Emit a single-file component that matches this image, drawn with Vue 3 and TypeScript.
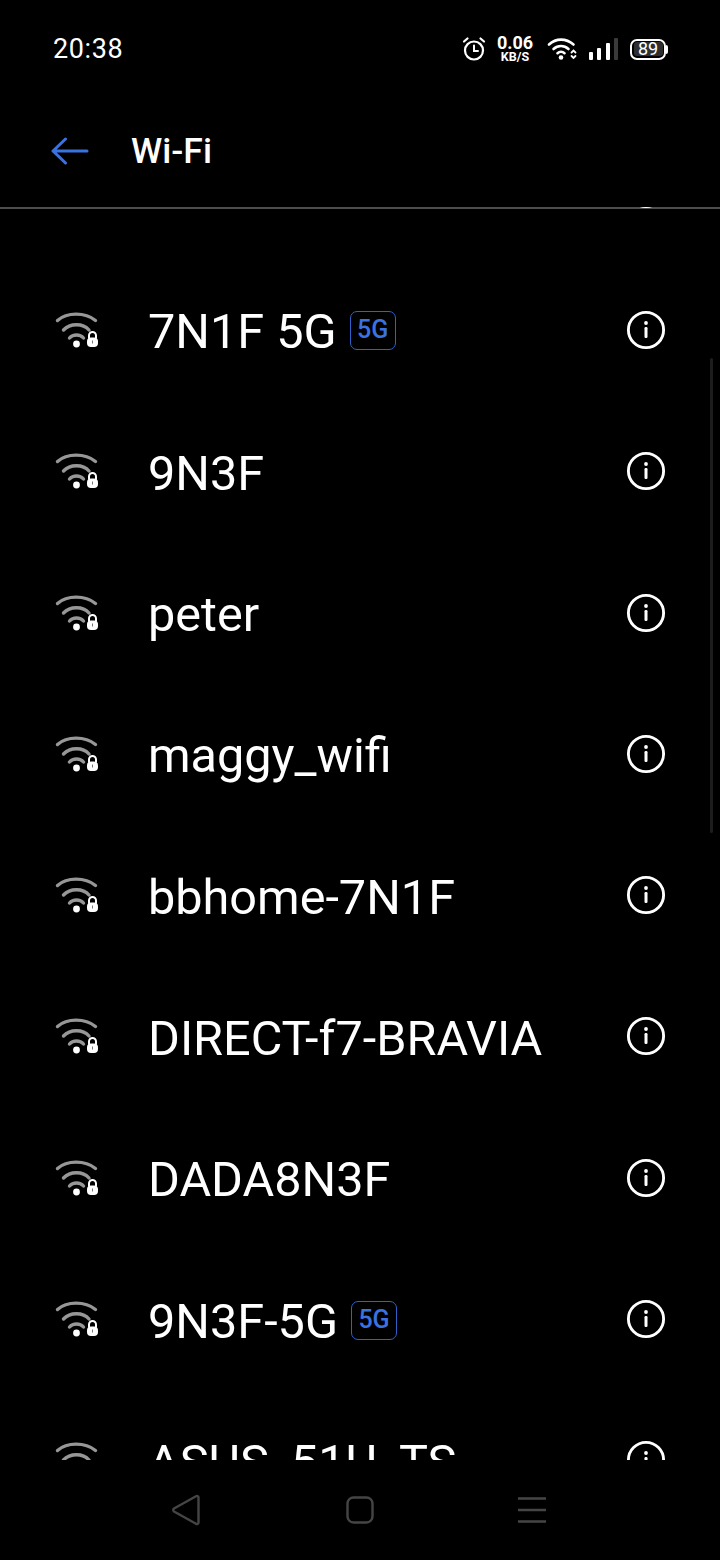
<script setup lang="ts">
interface Network { name: string; badge?: boolean }
const networks: Network[] = [
  { name: 'vvvvv' },
  { name: '7N1F 5G', badge: true },
  { name: '9N3F' },
  { name: 'peter' },
  { name: 'maggy_wifi' },
  { name: 'bbhome-7N1F' },
  { name: 'DIRECT-f7-BRAVIA' },
  { name: 'DADA8N3F' },
  { name: '9N3F-5G', badge: true },
  { name: 'ASUS_51U_TS' },
]
</script>

<template>
  <div class="phone">
    <div class="status">
      <span class="time">20:38</span>
      <div class="status-icons">
        <svg class="alarm" width="26" height="26" viewBox="0 0 26 26" fill="none" stroke="#fff" stroke-width="2.2" stroke-linecap="round">
          <circle cx="13" cy="14.5" r="9" />
          <path d="M13 9.5v5.5h4" stroke-width="2" />
          <path d="M3 5.5 6.5 2.5M23 5.500 19.500 2.500" />
        </svg>
        <div class="speed">
          <span class="speed-num">0.06</span>
          <span class="speed-unit">KB/S</span>
        </div>
        <svg class="st-wifi" width="30" height="24" viewBox="0 0 30 24" fill="none" stroke="#fff" stroke-width="2.6" stroke-linecap="round">
          <path d="M2 7.5C9 1 19 1 26.5 7.5" />
          <path d="M6.5 12C11 8 17 8 21.5 12" />
          <path d="M10.5 16.2C12.5 14.4 15.5 14.4 17.5 16.2" />
          <circle cx="14" cy="20.5" r="2.3" fill="#fff" stroke="none" />
          <path d="M24.5 15.5 26.5 13.5 28.500 15.500M24.500 19 26.500 21 28.500 19" stroke-width="1.8" />
        </svg>
        <div class="bars">
          <i class="bar b1"></i><i class="bar b2"></i><i class="bar b3"></i><i class="bar b4"></i>
        </div>
        <div class="battery"><span class="battery-fill">89</span></div>
      </div>
    </div>

    <div class="header">
      <svg class="back" width="38" height="28" viewBox="0 0 38 28" fill="none" stroke="#3b72e2" stroke-width="3" stroke-linecap="round" stroke-linejoin="round">
        <path d="M36 14H2.500M14.500 2 2 14l12.500 12" />
      </svg>
      <span class="title">Wi-Fi</span>
    </div>

    <div class="viewport">
      <div class="divider"></div>
      <div class="scrollbar"></div>
      <div class="list">
        <div v-for="n in networks" :key="n.name" class="row">
          <svg class="wifi" width="44" height="38" viewBox="0 0 44 38" fill="none" stroke-linecap="round">
            <path d="M2.500 9.500C12 1 30 1 40.500 9.500" stroke="#979797" stroke-width="3.400" />
            <path d="M8.500 19C15 12 28 12 34 19" stroke="#979797" stroke-width="3.400" />
            <path d="M14.500 27C18 23 25 23 28.500 27" stroke="#979797" stroke-width="3.400" />
            <circle cx="21.500" cy="33" r="3.400" fill="#fff" />
            <path d="M34 27v-2.500a3.500 3.500 0 0 1 7 0V27" stroke="#fff" stroke-width="2" />
            <rect x="32" y="26.500" width="11" height="9.500" rx="4" fill="#fff" />
            <rect x="37" y="29.500" width="1" height="3" fill="#777" />
          </svg>
          <span class="name">{{ n.name }}</span>
          <span v-if="n.badge" class="badge">5G</span>
          <svg class="info" width="40" height="40" viewBox="0 0 40 40" fill="none">
            <circle cx="20" cy="20" r="17.600" stroke="#fff" stroke-width="2.900" />
            <rect x="18.500" y="17" width="3" height="11" rx="1.200" fill="#fff" />
            <circle cx="20" cy="13" r="1.900" fill="#fff" />
          </svg>
        </div>
      </div>
    </div>

    <div class="nav">
      <svg width="30" height="32" viewBox="0 0 30 32" fill="none" stroke="#454545" stroke-width="2.400" stroke-linejoin="round">
        <path d="M27.500 3.500v25c0 1.500-1.500 2-2.500 1.200L3 17.500c-1-.8-1-2.200 0-3L25 2.300c1-.8 2.500-.3 2.500 1.200Z" />
      </svg>
      <svg width="30" height="30" viewBox="0 0 30 30" fill="none" stroke="#454545" stroke-width="2.400">
        <rect x="2.500" y="2.500" width="25" height="25" rx="6" />
      </svg>
      <svg width="30" height="28" viewBox="0 0 30 28" fill="none" stroke="#454545" stroke-width="2.400">
        <path d="M1 2.500h28M1 14h28M1 25.500h28" />
      </svg>
    </div>
  </div>
</template>

<style>
html, body { margin: 0; background: #000; }
</style>

<style scoped>
.phone {
  width: 720px;
  height: 1560px;
  background: #000;
  color: #fff;
  display: flex;
  flex-direction: column;
  overflow: hidden;
  font-family: Roboto, "Liberation Sans", sans-serif;
}
.status {
  height: 98px;
  flex: none;
  display: flex;
  align-items: center;
  justify-content: space-between;
  padding: 0 54px 0 53px;
  box-sizing: border-box;
}
.time { font-size: 27px; letter-spacing: .6px; }
.status-icons { display: flex; align-items: center; }
.speed { display: flex; flex-direction: column; align-items: center; margin-left: 11px; width: 35px; line-height: 1; }
.speed-num { font-size: 18px; font-weight: 700; line-height: 16px; }
.speed-unit { font-size: 12.500px; font-weight: 700; line-height: 12px; }
.st-wifi { margin-left: 14px; }
.bars { display: flex; align-items: flex-end; gap: 4.500px; height: 22px; margin-left: 12px; }
.bar { display: block; width: 4px; background: #fff; border-radius: 1px; }
.b1 { height: 8px; }
.b2 { height: 12px; }
.b3 { height: 17px; }
.b4 { height: 22px; background: #3a3a3a; }
.battery {
  position: relative;
  margin-left: 12px;
  width: 36px;
  height: 21px;
  box-sizing: border-box;
  border: 2px solid #fff;
  border-radius: 7px;
  padding: 1.500px;
  display: flex;
}
.battery::after {
  content: "";
  position: absolute;
  right: -4px;
  top: 4px;
  width: 2px;
  height: 9px;
  background: #fff;
  border-radius: 0 2px 2px 0;
}
.battery-fill {
  flex: 1;
  background: #2e2e2e;
  border-radius: 3px;
  font-size: 18px;
  font-weight: 400;
  line-height: 14px;
  text-align: center;
}
.header {
  height: 109px;
  flex: none;
  display: flex;
  align-items: center;
  padding-left: 51px;
  padding-bottom: 4px;
  box-sizing: border-box;
  background: #000;
}
.back { margin-right: 42px; }
.title { font-size: 35.500px; font-weight: 500; }
.viewport {
  position: relative;
  height: 1253px;
  flex: none;
  overflow: hidden;
}
.divider {
  position: absolute;
  left: 0;
  right: 0;
  top: 0;
  height: 2px;
  background: rgba(255, 255, 255, .3);
  z-index: 2;
}
.scrollbar {
  position: absolute;
  right: 7px;
  top: 151px;
  width: 3px;
  height: 475px;
  border-radius: 2px;
  background: #1d1d1d;
}
.list { margin-top: -89px; }
.row {
  height: 141.300px;
  display: flex;
  align-items: center;
  padding-left: 55px;
  padding-right: 54px;
  box-sizing: border-box;
}
.wifi { flex: none; margin-right: 49px; }
.name {
  font-size: 48.600px;
  line-height: 56px;
  position: relative;
  top: 2.500px;
  white-space: nowrap;
}
.badge {
  box-sizing: border-box;
  width: 46px;
  height: 39px;
  margin-left: 13px;
  margin-top: 2px;
  border: 1.500px solid #2f62c8;
  border-radius: 7px;
  color: #3b72e2;
  font-size: 25px;
  font-weight: 500;
  line-height: 36px;
  text-align: center;
}
.info { margin-left: auto; flex: none; }
.nav {
  flex: 1;
  display: grid;
  grid-template-columns: 174px 174px 170px;
  justify-content: center;
  justify-items: center;
  align-items: center;
  padding-right: 4px;
}
</style>
